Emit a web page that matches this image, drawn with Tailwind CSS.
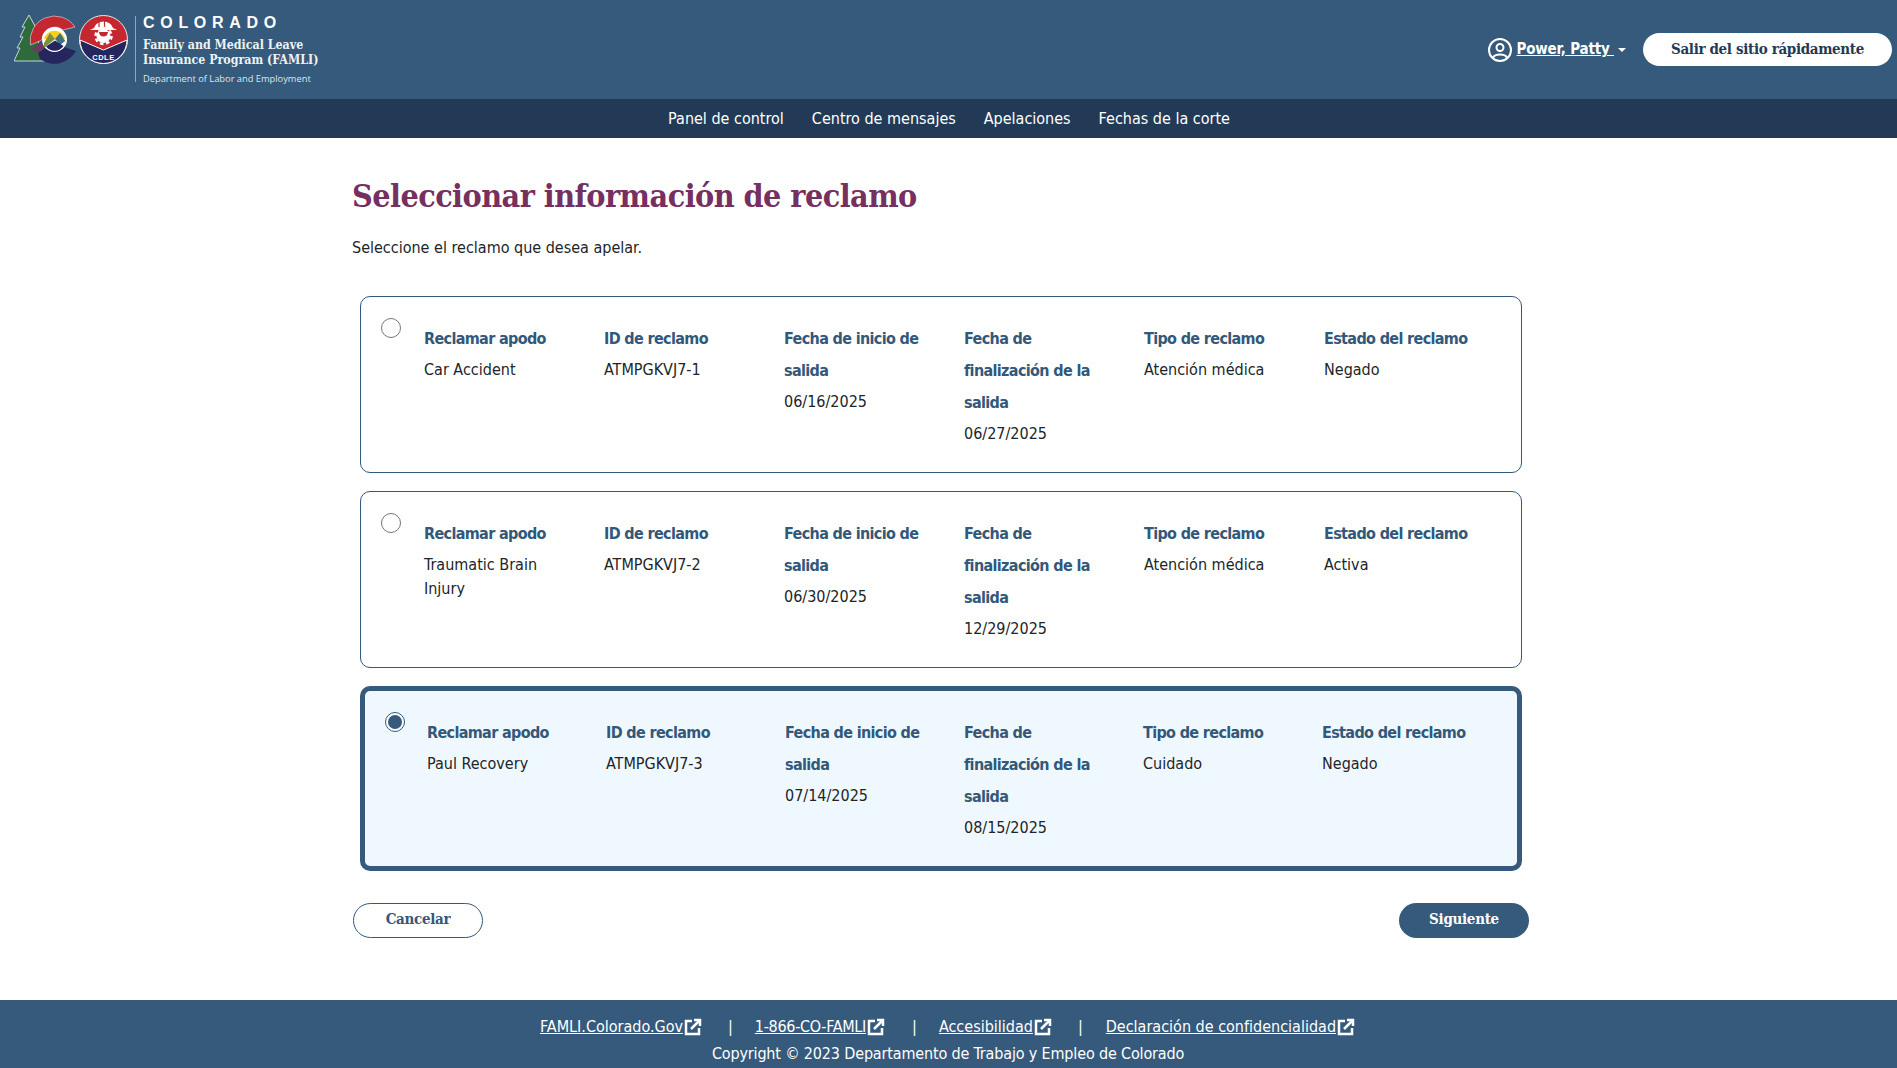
<!DOCTYPE html>
<html lang="es">
<head>
<meta charset="UTF-8">
<title>Seleccionar información de reclamo</title>
<script src="https://cdn.jsdelivr.net/npm/@tailwindcss/browser@4"></script>
</head>
<body class="min-h-[1068px] flex flex-col bg-white text-[#212529] font-['DejaVu_Sans_Condensed','DejaVu_Sans',sans-serif] text-[16px]">

<!-- header -->
<header class="h-[99px] bg-[#355a7c] flex items-center justify-between text-white">
  <div class="flex items-start pl-[14px] pt-[15px] self-start">
    <svg width="115" height="52" viewBox="0 0 115 52">
      <!-- tree -->
      <path d="M15 0 L22 13 L20 13 L25 24 L23 24 L28 36 L31 46 L0 46 L6 33 L3 33 L9 22 L6 22 L11 12 L8 12 Z" fill="#2e6b3c" stroke="#c9d3da" stroke-width="1"/>
      <!-- C -->
      <path d="M61 12 A24.500 24.500 0 0 0 16.500 30 L28 25 A13 13 0 0 1 49 15 Z" fill="#c4272f" stroke="#dfe5ea" stroke-width=".6"/>
      <path d="M18 34 L28 25 A13 13 0 0 0 31 33 L24 38 Z" fill="#6b3a63"/>
      <path d="M26 44 A24.500 24.500 0 0 0 62 36 L50 32 A13 13 0 0 1 31 33 L24 38 Z" fill="#26265f"/>
      <circle cx="40.500" cy="24.500" r="12.500" fill="#fff"/>
      <path d="M30 24 A10.800 10.800 0 0 1 51 24 Z" fill="#f7cf1f"/>
      <path d="M30 28 L36 18 L41 24 L30 33 Z" fill="#7c8f3d"/>
      <path d="M41 24 L46 18 L51.200 26 L46 30 Z" fill="#3f6f87"/>
      <path d="M32 31.500 L41 25.500 L49.500 31 A10.800 10.800 0 0 1 32 31.500 Z" fill="#26265f"/>
      <!-- CDLE seal -->
      <circle cx="89.500" cy="24.500" r="24" fill="#c4272f" stroke="#e5e9ed" stroke-width="1"/>
      <path d="M66 25 L89.500 35 L113 25 A23.500 23.500 0 0 1 66 25 Z" fill="#26265f" stroke="#fff" stroke-width="1"/>
      <path d="M80 13 A10 9.500 0 0 1 99 13 L103 15 L76 15 L80 13 Z" fill="#fff"/>
      <path d="M85 4 L85 12 M90.500 3 L90.500 12" stroke="#c4272f" stroke-width="1.200"/>
      <circle cx="89.500" cy="21" r="7" fill="#fff"/>
      <circle cx="89.500" cy="21" r="8" fill="none" stroke="#fff" stroke-width="2.500" stroke-dasharray="3.500 2.780"/>
      <path d="M85 17 H94 A4.500 4.500 0 0 1 85 17 Z" fill="#c4272f"/>
      <text x="89.500" y="44.500" text-anchor="middle" fill="#fff" font-size="7.500" font-weight="700" font-family="'Liberation Sans',sans-serif" letter-spacing=".5">CDLE</text>
    </svg>
    <div class="ml-[6px] w-[1px] h-[66px] mt-[1px] bg-[#8fa5b9]"></div>
    <div class="ml-[7px] flex flex-col">
      <span class="font-['Liberation_Sans',sans-serif] font-bold text-[16px] leading-[16px] tracking-[5.700px]">COLORADO</span>
      <span class="font-['DejaVu_Serif_Condensed','DejaVu_Serif',serif] font-bold text-[12.300px] leading-[14.500px] mt-[7px] text-[#eef2f5]">Family and Medical Leave<br>Insurance Program (FAMLI)</span>
      <span class="font-['Open_Sans',sans-serif] text-[9.300px] leading-[12px] mt-[6px] text-[#dfe6ec]">Department of Labor and Employment</span>
    </div>
  </div>
  <div class="flex items-center pr-[5px]">
    <svg width="24" height="24" viewBox="0 0 24 24" fill="none" stroke="#fff" stroke-width="2" class="mr-[5px]">
      <circle cx="12" cy="12" r="11"/>
      <circle cx="12" cy="9.500" r="3.500"/>
      <path d="M5 19.500 C7 15.500 17 15.500 19 19.500"/>
    </svg>
    <a href="#" class="font-bold underline text-[15px] tracking-[-0.2px] whitespace-pre">Power, Patty </a>
    <span class="ml-[4px] w-0 h-0 border-x-[4px] border-x-transparent border-t-[4px] border-t-white"></span>
    <button class="ml-[17px] w-[249px] h-[33px] rounded-full bg-white text-[#233a56] font-bold text-[15px] tracking-[-0.35px] font-['DejaVu_Serif_Condensed','DejaVu_Serif',serif]">Salir del sitio rápidamente</button>
  </div>
</header>

<!-- nav -->
<nav class="h-[39px] bg-[#233a56] flex items-center justify-center gap-[28px] text-white text-[16px] pl-[1px]">
  <a href="#">Panel de control</a>
  <a href="#">Centro de mensajes</a>
  <a href="#">Apelaciones</a>
  <a href="#">Fechas de la corte</a>
</nav>

<main class="flex-1 pl-[352px] w-[1529px]">
  <h1 class="mt-[38px] text-[32px] leading-[40px] font-bold tracking-[-0.55px] text-[#76305f] font-['DejaVu_Serif_Condensed','DejaVu_Serif',serif]">Seleccionar información de reclamo</h1>
  <p class="mt-[20px] leading-[24px]">Seleccione el reclamo que desea apelar.</p>

  <div class="ml-[8px] mt-[36px] w-[1162px] flex flex-col gap-[18px]">
    <!-- claim 1 -->
    <label class="h-[177px] flex border border-[#33587a] rounded-[10px] pl-[20px] pt-[21px]">
      <span class="w-[20px] h-[20px] shrink-0 rounded-full border border-[#767676] bg-white"></span>
      <div class="ml-[23px] mt-[5px] grid grid-cols-[180px_180px_180px_180px_180px_180px]">
        <div class="pr-[28px]"><div class="font-bold tracking-[-0.65px] leading-[32px] text-[#33587a]">Reclamar apodo</div><div class="mt-[3px] leading-[24px]">Car Accident</div></div>
        <div class="pr-[28px]"><div class="font-bold tracking-[-0.65px] leading-[32px] text-[#33587a]">ID de reclamo</div><div class="mt-[3px] leading-[24px]">ATMPGKVJ7-1</div></div>
        <div class="pr-[28px]"><div class="font-bold tracking-[-0.65px] leading-[32px] text-[#33587a]">Fecha de inicio de salida</div><div class="mt-[3px] leading-[24px]">06/16/2025</div></div>
        <div class="pr-[28px]"><div class="font-bold tracking-[-0.65px] leading-[32px] text-[#33587a]">Fecha de finalización de la salida</div><div class="mt-[3px] leading-[24px]">06/27/2025</div></div>
        <div class="pr-[28px]"><div class="font-bold tracking-[-0.65px] leading-[32px] text-[#33587a]">Tipo de reclamo</div><div class="mt-[3px] leading-[24px]">Atención médica</div></div>
        <div class="pr-[28px]"><div class="font-bold tracking-[-0.65px] leading-[32px] text-[#33587a]">Estado del reclamo</div><div class="mt-[3px] leading-[24px]">Negado</div></div>
      </div>
    </label>
    <!-- claim 2 -->
    <label class="h-[177px] flex border border-[#33587a] rounded-[10px] pl-[20px] pt-[21px]">
      <span class="w-[20px] h-[20px] shrink-0 rounded-full border border-[#767676] bg-white"></span>
      <div class="ml-[23px] mt-[5px] grid grid-cols-[180px_180px_180px_180px_180px_180px]">
        <div class="pr-[28px]"><div class="font-bold tracking-[-0.65px] leading-[32px] text-[#33587a]">Reclamar apodo</div><div class="mt-[3px] leading-[24px]">Traumatic Brain Injury</div></div>
        <div class="pr-[28px]"><div class="font-bold tracking-[-0.65px] leading-[32px] text-[#33587a]">ID de reclamo</div><div class="mt-[3px] leading-[24px]">ATMPGKVJ7-2</div></div>
        <div class="pr-[28px]"><div class="font-bold tracking-[-0.65px] leading-[32px] text-[#33587a]">Fecha de inicio de salida</div><div class="mt-[3px] leading-[24px]">06/30/2025</div></div>
        <div class="pr-[28px]"><div class="font-bold tracking-[-0.65px] leading-[32px] text-[#33587a]">Fecha de finalización de la salida</div><div class="mt-[3px] leading-[24px]">12/29/2025</div></div>
        <div class="pr-[28px]"><div class="font-bold tracking-[-0.65px] leading-[32px] text-[#33587a]">Tipo de reclamo</div><div class="mt-[3px] leading-[24px]">Atención médica</div></div>
        <div class="pr-[28px]"><div class="font-bold tracking-[-0.65px] leading-[32px] text-[#33587a]">Estado del reclamo</div><div class="mt-[3px] leading-[24px]">Activa</div></div>
      </div>
    </label>
    <!-- claim 3, selected -->
    <label class="h-[185px] flex border-[5px] border-[#355a7c] bg-[#f0f8ff] rounded-[10px] pl-[20px] pt-[21px]">
      <span class="w-[20px] h-[20px] shrink-0 rounded-full border border-[#33587a] bg-white flex items-center justify-center"><span class="w-[14px] h-[14px] rounded-full bg-[#355a7c]"></span></span>
      <div class="ml-[22px] mt-[5px] grid grid-cols-[179px_179px_179px_179px_179px_179px]">
        <div class="pr-[28px]"><div class="font-bold tracking-[-0.65px] leading-[32px] text-[#33587a]">Reclamar apodo</div><div class="mt-[3px] leading-[24px]">Paul Recovery</div></div>
        <div class="pr-[28px]"><div class="font-bold tracking-[-0.65px] leading-[32px] text-[#33587a]">ID de reclamo</div><div class="mt-[3px] leading-[24px]">ATMPGKVJ7-3</div></div>
        <div class="pr-[28px]"><div class="font-bold tracking-[-0.65px] leading-[32px] text-[#33587a]">Fecha de inicio de salida</div><div class="mt-[3px] leading-[24px]">07/14/2025</div></div>
        <div class="pr-[28px]"><div class="font-bold tracking-[-0.65px] leading-[32px] text-[#33587a]">Fecha de finalización de la salida</div><div class="mt-[3px] leading-[24px]">08/15/2025</div></div>
        <div class="pr-[28px]"><div class="font-bold tracking-[-0.65px] leading-[32px] text-[#33587a]">Tipo de reclamo</div><div class="mt-[3px] leading-[24px]">Cuidado</div></div>
        <div class="pr-[28px]"><div class="font-bold tracking-[-0.65px] leading-[32px] text-[#33587a]">Estado del reclamo</div><div class="mt-[3px] leading-[24px]">Negado</div></div>
      </div>
    </label>
  </div>

  <div class="mt-[32px] flex justify-between pl-[1px]">
    <button class="w-[130px] h-[35px] rounded-full border border-[#33587a] bg-white text-[#33587a] font-bold text-[15px] tracking-[-0.3px] pb-[2px] font-['DejaVu_Serif_Condensed','DejaVu_Serif',serif]">Cancelar</button>
    <button class="w-[130px] h-[35px] rounded-full bg-[#355a7c] text-white font-bold text-[15px] tracking-[-0.3px] pb-[2px] font-['DejaVu_Serif_Condensed','DejaVu_Serif',serif]">Siguiente</button>
  </div>
</main>

<!-- footer -->
<footer class="h-[68px] bg-[#355a7c] text-white flex flex-col items-center pt-[15px]">
  <div class="flex items-center h-[24px] leading-[24px] pr-[2px]">
    <a href="#" class="underline">FAMLI.Colorado.Gov</a>
    <svg width="18" height="18" viewBox="0 0 18 18" fill="none" stroke="#fff" stroke-width="2.500" class="ml-[1px]"><path d="M8 3 H2 V16 H15 V10"/><path d="M7 11 L15 3"/><path d="M10 2 H16 V8"/></svg>
    <span class="ml-[26px] mr-[22px]">|</span>
    <a href="#" class="underline tracking-[-0.3px]">1-866-CO-FAMLI</a>
    <svg width="18" height="18" viewBox="0 0 18 18" fill="none" stroke="#fff" stroke-width="2.500" class="ml-[1px]"><path d="M8 3 H2 V16 H15 V10"/><path d="M7 11 L15 3"/><path d="M10 2 H16 V8"/></svg>
    <span class="ml-[27px] mr-[22px]">|</span>
    <a href="#" class="underline">Accesibilidad</a>
    <svg width="18" height="18" viewBox="0 0 18 18" fill="none" stroke="#fff" stroke-width="2.500" class="ml-[1px]"><path d="M8 3 H2 V16 H15 V10"/><path d="M7 11 L15 3"/><path d="M10 2 H16 V8"/></svg>
    <span class="ml-[26px] mr-[23px]">|</span>
    <a href="#" class="underline">Declaración de confidencialidad</a>
    <svg width="18" height="18" viewBox="0 0 18 18" fill="none" stroke="#fff" stroke-width="2.500" class="ml-[1px]"><path d="M8 3 H2 V16 H15 V10"/><path d="M7 11 L15 3"/><path d="M10 2 H16 V8"/></svg>
  </div>
  <p class="mt-[3px] leading-[24px] tracking-[-0.16px] pr-[1px]">Copyright © 2023 Departamento de Trabajo y Empleo de Colorado</p>
</footer>
</body>
</html>
